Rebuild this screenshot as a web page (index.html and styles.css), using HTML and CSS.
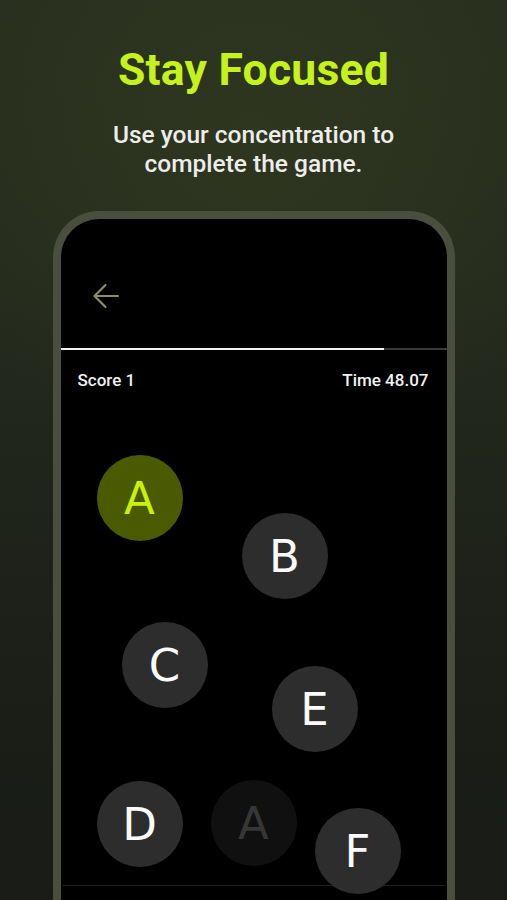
FILE: index.html
```html
<!DOCTYPE html>
<html>
<head>
<meta charset="utf-8">
<link rel="stylesheet" href="styles.css">
</head>
<body>
<div class="page">
  <header class="intro">
    <h1 class="title">Stay Focused</h1>
    <p class="subtitle">Use your concentration to<br>complete the game.</p>
  </header>
  <div class="phone">
    <div class="screen">
      <div class="appbar">
        <svg class="back" width="30" height="26" viewBox="0 0 30 26">
          <path d="M27 13H4M14.5 2L3.5 13l11 11" fill="none" stroke="#8a8c6c" stroke-width="2.2" stroke-linecap="round" stroke-linejoin="round"/>
        </svg>
      </div>
      <div class="progress"><div class="progress-fill" style="width:83.7%"></div></div>
      <div class="stats">
        <span>Score 1</span>
        <span>Time 48.07</span>
      </div>
      <div class="canvas">
        <div class="bubble active" style="left:36px;top:55px">A</div>
        <div class="bubble" style="left:181px;top:113px">B</div>
        <div class="bubble" style="left:61px;top:222px">C</div>
        <div class="bubble" style="left:211px;top:266px">E</div>
        <div class="bubble" style="left:36px;top:381px">D</div>
        <div class="bubble faded" style="left:150px;top:380px">A</div>
        <div class="bubble" style="left:254px;top:408px">F</div>
      </div>
      <div class="navline"></div>
    </div>
  </div>
</div>
</body>
</html>
```

FILE: styles.css
```css
html, body {
  margin: 0;
  padding: 0;
}
body {
  width: 507px;
  height: 900px;
  overflow: hidden;
  font-family: Roboto, "Liberation Sans", sans-serif;
  background:
    radial-gradient(ellipse 70% 35% at 50% 15%, rgba(52, 62, 34, 0.55), rgba(52, 62, 34, 0) 100%),
    linear-gradient(180deg, #282e1e 0%, #262c1d 30%, #1d2119 65%, #181b16 100%);
}
.page {
  display: flex;
  flex-direction: column;
  align-items: center;
}
.intro {
  text-align: center;
  padding-top: 44px;
}
.title {
  margin: 0;
  font-size: 44.5px;
  font-weight: 700;
  line-height: 52px;
  color: #c6f21c;
  letter-spacing: 0.2px;
}
.subtitle {
  margin: 24px 0 0;
  font-size: 24.5px;
  font-weight: 500;
  line-height: 29px;
  color: #ededea;
}
.phone {
  margin-top: 33px;
  width: 386px;
  height: 720px;
  border: 8.5px solid #4a4e3f;
  border-bottom: none;
  border-radius: 46px 46px 0 0;
  background: #000;
  overflow: visible;
}
.screen {
  display: flex;
  flex-direction: column;
  border-radius: 38px 38px 0 0;
  overflow: hidden;
  height: 100%;
}
.appbar {
  height: 129px;
  display: flex;
  align-items: center;
  padding-left: 30px;
  padding-top: 25px;
  box-sizing: border-box;
}
.back {
  display: block;
}
.progress {
  height: 2px;
  background: #3a3a3a;
}
.progress-fill {
  height: 100%;
  background: #f2f2f2;
}
.stats {
  height: 40px;
  margin-top: 10px;
  display: flex;
  align-items: center;
  justify-content: space-between;
  padding: 0 18px 0 17px;
  color: #f2f2f2;
  font-size: 17px;
  font-weight: 500;
}
.canvas {
  position: relative;
  height: 485px;
  flex: none;
}
.bubble {
  position: absolute;
  width: 86px;
  height: 86px;
  border-radius: 50%;
  background: #2d2d2d;
  color: #fafafa;
  display: flex;
  align-items: center;
  justify-content: center;
  font-family: "DejaVu Sans", sans-serif;
  font-size: 45px;
  line-height: 1;
  z-index: 2;
}
.bubble.active {
  background: #4a5a02;
  color: #c8f200;
}
.bubble.faded {
  background: #101010;
  color: #363636;
}
.navline {
  height: 1px;
  margin: 0 2px;
  background: #1e1e1e;
}
```
